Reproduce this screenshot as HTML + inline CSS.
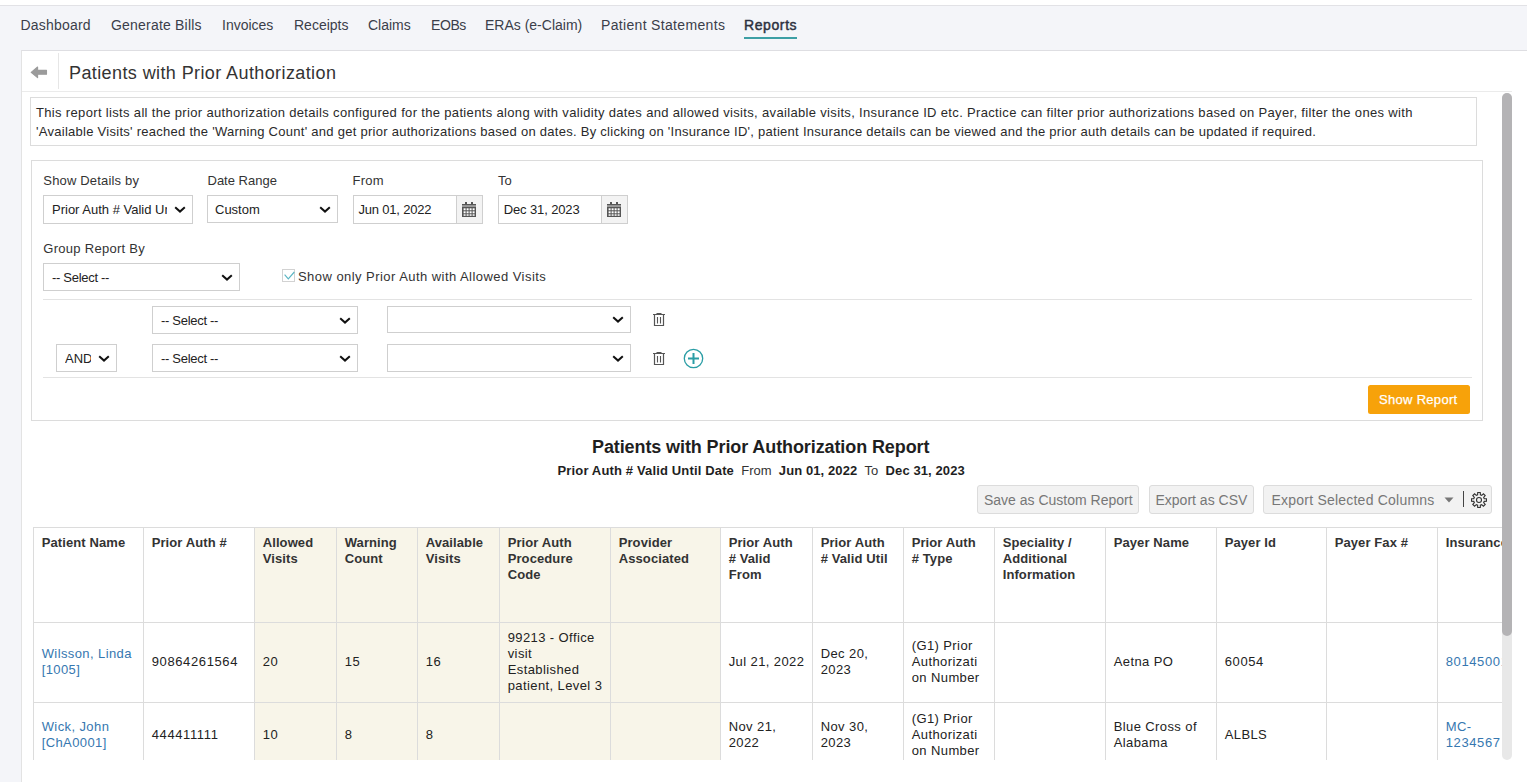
<!DOCTYPE html>
<html><head><meta charset="utf-8">
<style>
*{box-sizing:border-box}
html,body{margin:0;padding:0}
body{width:1527px;height:782px;overflow:hidden;position:relative;background:#f4f5f9;font-family:"Liberation Sans",sans-serif;color:#333}
.a{position:absolute;white-space:nowrap;line-height:normal}
#top{position:absolute;left:0;top:0;width:1527px;height:6px;background:#fff;border-bottom:1px solid #e2e2e6}
.nav{font-size:14px;color:#3b3e4a;top:17px}
#card{position:absolute;left:21px;top:50px;width:1506px;height:732px;background:#fff;border-left:1px solid #e3e3e3;border-top:1px solid #dedee2}
.sel{position:absolute;border:1px solid #cfcfcf;background:#fff;overflow:hidden}
.sel span{position:absolute;font-size:13px;color:#222;white-space:nowrap}
.chev{position:absolute}
.lbl{font-size:13px;color:#333}
.btn{position:absolute;background:#f2f2f2;border:1px solid #dcdcdc;border-radius:3px}
.btn span{position:absolute;font-size:14px;color:#7a7a7a;white-space:nowrap}
#tbl{position:absolute;left:33px;top:527px;width:1469px;height:233px;overflow:hidden}
.td,.th{position:absolute;white-space:nowrap;font-size:13px;line-height:16px;color:#222;letter-spacing:0.4px;margin-left:0.7px;margin-top:-0.5px}
.dg{letter-spacing:0.62px}
.th{font-weight:bold;color:#333;letter-spacing:0.1px}
a{color:#3677b0;text-decoration:none}
</style></head><body>
<div id="top"></div>
<div class="a nav" style="left:20.5px;letter-spacing:0.2px">Dashboard</div>
<div class="a nav" style="left:111px;letter-spacing:0.2px">Generate Bills</div>
<div class="a nav" style="left:222px">Invoices</div>
<div class="a nav" style="left:294px">Receipts</div>
<div class="a nav" style="left:368px">Claims</div>
<div class="a nav" style="left:431px;letter-spacing:-0.4px">EOBs</div>
<div class="a nav" style="left:485px">ERAs (e-Claim)</div>
<div class="a nav" style="left:601px;letter-spacing:0.33px">Patient Statements</div>
<div class="a nav" style="left:744px;color:#2c3140;-webkit-text-stroke:0.45px #2c3140;letter-spacing:0.6px">Reports</div>
<div style="position:absolute;left:744px;top:37px;width:53px;height:1.5px;background:#3d9fa5"></div>

<div id="card"></div>
<div id="tbl">
<div style="position:absolute;left:221px;top:0;width:82px;height:240px;background:#f8f5e9"></div>
<div style="position:absolute;left:303px;top:0;width:81px;height:240px;background:#f8f5e9"></div>
<div style="position:absolute;left:384px;top:0;width:82px;height:240px;background:#f8f5e9"></div>
<div style="position:absolute;left:466px;top:0;width:111px;height:240px;background:#f8f5e9"></div>
<div style="position:absolute;left:577px;top:0;width:110px;height:240px;background:#f8f5e9"></div>
<div style="position:absolute;left:0px;top:0;width:1px;height:240px;background:#dcdcdc"></div>
<div style="position:absolute;left:110px;top:0;width:1px;height:240px;background:#dcdcdc"></div>
<div style="position:absolute;left:221px;top:0;width:1px;height:240px;background:#dcdcdc"></div>
<div style="position:absolute;left:303px;top:0;width:1px;height:240px;background:#dcdcdc"></div>
<div style="position:absolute;left:384px;top:0;width:1px;height:240px;background:#dcdcdc"></div>
<div style="position:absolute;left:466px;top:0;width:1px;height:240px;background:#dcdcdc"></div>
<div style="position:absolute;left:577px;top:0;width:1px;height:240px;background:#dcdcdc"></div>
<div style="position:absolute;left:687px;top:0;width:1px;height:240px;background:#dcdcdc"></div>
<div style="position:absolute;left:779px;top:0;width:1px;height:240px;background:#dcdcdc"></div>
<div style="position:absolute;left:870px;top:0;width:1px;height:240px;background:#dcdcdc"></div>
<div style="position:absolute;left:961px;top:0;width:1px;height:240px;background:#dcdcdc"></div>
<div style="position:absolute;left:1072px;top:0;width:1px;height:240px;background:#dcdcdc"></div>
<div style="position:absolute;left:1183px;top:0;width:1px;height:240px;background:#dcdcdc"></div>
<div style="position:absolute;left:1293px;top:0;width:1px;height:240px;background:#dcdcdc"></div>
<div style="position:absolute;left:1404px;top:0;width:1px;height:240px;background:#dcdcdc"></div>
<div style="position:absolute;left:0;top:0px;width:1600px;height:1px;background:#dcdcdc"></div>
<div style="position:absolute;left:0;top:95px;width:1600px;height:1px;background:#dcdcdc"></div>
<div style="position:absolute;left:0;top:175px;width:1600px;height:1px;background:#dcdcdc"></div>
<div class="th" style="left:8px;top:8.0px">Patient Name</div>
<div class="th" style="left:118px;top:8.0px">Prior Auth #</div>
<div class="th" style="left:229px;top:8.0px">Allowed<br>Visits</div>
<div class="th" style="left:311px;top:8.0px">Warning<br>Count</div>
<div class="th" style="left:392px;top:8.0px">Available<br>Visits</div>
<div class="th" style="left:474px;top:8.0px">Prior Auth<br>Procedure<br>Code</div>
<div class="th" style="left:585px;top:8.0px">Provider<br>Associated</div>
<div class="th" style="left:695px;top:8.0px">Prior Auth<br># Valid<br>From</div>
<div class="th" style="left:787px;top:8.0px">Prior Auth<br># Valid Util</div>
<div class="th" style="left:878px;top:8.0px">Prior Auth<br># Type</div>
<div class="th" style="left:969px;top:8.0px">Speciality /<br>Additional<br>Information</div>
<div class="th" style="left:1080px;top:8.0px">Payer Name</div>
<div class="th" style="left:1191px;top:8.0px">Payer Id</div>
<div class="th" style="left:1301px;top:8.0px">Payer Fax #</div>
<div class="th" style="left:1412px;top:8.0px">Insurance ID</div>
<div class="td" style="left:8px;top:119.5px"><a>Wilsson, Linda<br>[1005]</a></div>
<div class="td" style="left:118px;top:127.5px"><span class="dg">90864261564</span></div>
<div class="td" style="left:229px;top:127.5px"><span class="dg">20</span></div>
<div class="td" style="left:311px;top:127.5px"><span class="dg">15</span></div>
<div class="td" style="left:392px;top:127.5px"><span class="dg">16</span></div>
<div class="td" style="left:474px;top:103.5px">99213 - Office<br>visit<br>Established<br>patient, Level 3</div>

<div class="td" style="left:695px;top:127.5px">Jul 21, 2022</div>
<div class="td" style="left:787px;top:119.5px">Dec 20,<br>2023</div>
<div class="td" style="left:878px;top:111.5px">(G1) Prior<br>Authorizati<br>on Number</div>

<div class="td" style="left:1080px;top:127.5px">Aetna PO</div>
<div class="td" style="left:1191px;top:127.5px"><span class="dg">60054</span></div>

<div class="td" style="left:1412px;top:127.5px"><a><span class="dg">80145001</span></a></div>
<div class="td" style="left:8px;top:192.0px"><a>Wick, John<br>[ChA0001]</a></div>
<div class="td" style="left:118px;top:200.0px"><span class="dg">444411111</span></div>
<div class="td" style="left:229px;top:200.0px"><span class="dg">10</span></div>
<div class="td" style="left:311px;top:200.0px">8</div>
<div class="td" style="left:392px;top:200.0px">8</div>


<div class="td" style="left:695px;top:192.0px">Nov 21,<br>2022</div>
<div class="td" style="left:787px;top:192.0px">Nov 30,<br>2023</div>
<div class="td" style="left:878px;top:184.0px">(G1) Prior<br>Authorizati<br>on Number</div>

<div class="td" style="left:1080px;top:192.0px">Blue Cross of<br>Alabama</div>
<div class="td" style="left:1191px;top:200.0px">ALBLS</div>

<div class="td" style="left:1412px;top:192.0px"><a>MC-<br><span class="dg">1234567</span></a></div>
</div>
<!-- title bar -->
<svg style="position:absolute;left:30px;top:66px" width="18" height="13" viewBox="0 0 18 13"><path d="M1.2 6.4 L7.6 1 L7.6 4.4 L16.5 4.4 L16.5 8.3 L7.6 8.3 L7.6 11.7 Z" fill="#9b9b9b" stroke="#9b9b9b" stroke-width="1.1" stroke-linejoin="round"/></svg>
<div style="position:absolute;left:58px;top:53px;width:1px;height:36px;background:#e6e6e6"></div>
<div class="a" style="left:69px;top:63px;font-size:18px;color:#333;letter-spacing:0.4px">Patients with Prior Authorization</div>
<div style="position:absolute;left:22px;top:91px;width:1490px;height:1px;background:#ebebeb"></div>

<!-- description -->
<div style="position:absolute;left:30px;top:97px;width:1447px;height:49px;border:1px solid #dcdcdc"></div>
<div class="a" style="left:36px;top:104px;font-size:13px;color:#2a2a2a;line-height:18.7px;letter-spacing:0.337px">This report lists all the prior authorization details configured for the patients along with validity dates and allowed visits, available visits, Insurance ID etc. Practice can filter prior authorizations based on Payer, filter the ones with<br><span style="letter-spacing:0.27px">'Available Visits' reached the 'Warning Count' and get prior authorizations based on dates. By clicking on 'Insurance ID', patient Insurance details can be viewed and the prior auth details can be updated if required.</span></div>

<!-- filter box -->
<div style="position:absolute;left:31px;top:160px;width:1452px;height:261px;border:1px solid #dcdcdc"></div>
<div class="a lbl" style="left:43.3px;top:172.7px;letter-spacing:0.17px">Show Details by</div>
<div class="a lbl" style="left:207.5px;top:172.7px">Date Range</div>
<div class="a lbl" style="left:352.5px;top:172.7px;letter-spacing:0.25px">From</div>
<div class="a lbl" style="left:498px;top:172.7px">To</div>
<div class="sel" style="left:43px;top:195px;width:150px;height:29px"><span style="left:8px;top:6.0px;width:115px;overflow:hidden;">Prior Auth # Valid Until Date</span></div><svg class="chev" style="left:173.8px;top:205.5px" width="12" height="7" viewBox="0 0 12 7"><path d="M1.2 1.3 L6 5.6 L10.8 1.3" fill="none" stroke="#111" stroke-width="2"/></svg>
<div class="sel" style="left:207px;top:195px;width:131px;height:28px"><span style="left:7px;top:5.5px;">Custom</span></div><svg class="chev" style="left:318.8px;top:205.5px" width="12" height="7" viewBox="0 0 12 7"><path d="M1.2 1.3 L6 5.6 L10.8 1.3" fill="none" stroke="#111" stroke-width="2"/></svg>
<div class="sel" style="left:353px;top:195px;width:104px;height:29px"><span style="left:4.5px;top:6px;letter-spacing:-0.2px">Jun 01, 2022</span></div>
<div style="position:absolute;left:456px;top:195px;width:27px;height:29px;background:#f3f3f3;border:1px solid #cfcfcf"></div>
<svg width="14" height="15" viewBox="0 0 14 15" style="position:absolute;left:462px;top:202px"><rect x="3" y="0" width="2" height="3" fill="#555"/><rect x="9" y="0" width="2" height="3" fill="#555"/><rect x="0" y="2" width="14" height="1.6" fill="#555"/><rect x="0" y="3.6" width="14" height="1.6" fill="#999"/><rect x="0" y="5" width="14" height="10" fill="#555"/><g fill="#fff"><rect x="1.6" y="6.3" width="2" height="2"/><rect x="4.6" y="6.3" width="2" height="2"/><rect x="7.6" y="6.3" width="2" height="2"/><rect x="10.6" y="6.3" width="2" height="2"/><rect x="1.6" y="9.3" width="2" height="2"/><rect x="4.6" y="9.3" width="2" height="2"/><rect x="7.6" y="9.3" width="2" height="2"/><rect x="10.6" y="9.3" width="2" height="2"/><rect x="1.6" y="12.3" width="2" height="1.5"/><rect x="4.6" y="12.3" width="2" height="1.5"/><rect x="7.6" y="12.3" width="2" height="1.5"/><rect x="10.6" y="12.3" width="2" height="1.5"/></g></svg>
<div class="sel" style="left:498px;top:195px;width:104px;height:29px"><span style="left:4.7px;top:6px;letter-spacing:-0.12px">Dec 31, 2023</span></div>
<div style="position:absolute;left:601px;top:195px;width:27px;height:29px;background:#f3f3f3;border:1px solid #cfcfcf"></div>
<svg width="14" height="15" viewBox="0 0 14 15" style="position:absolute;left:607px;top:202px"><rect x="3" y="0" width="2" height="3" fill="#555"/><rect x="9" y="0" width="2" height="3" fill="#555"/><rect x="0" y="2" width="14" height="1.6" fill="#555"/><rect x="0" y="3.6" width="14" height="1.6" fill="#999"/><rect x="0" y="5" width="14" height="10" fill="#555"/><g fill="#fff"><rect x="1.6" y="6.3" width="2" height="2"/><rect x="4.6" y="6.3" width="2" height="2"/><rect x="7.6" y="6.3" width="2" height="2"/><rect x="10.6" y="6.3" width="2" height="2"/><rect x="1.6" y="9.3" width="2" height="2"/><rect x="4.6" y="9.3" width="2" height="2"/><rect x="7.6" y="9.3" width="2" height="2"/><rect x="10.6" y="9.3" width="2" height="2"/><rect x="1.6" y="12.3" width="2" height="1.5"/><rect x="4.6" y="12.3" width="2" height="1.5"/><rect x="7.6" y="12.3" width="2" height="1.5"/><rect x="10.6" y="12.3" width="2" height="1.5"/></g></svg>
<div class="a lbl" style="left:43.3px;top:241.2px;letter-spacing:0.28px">Group Report By</div>
<div class="sel" style="left:43px;top:263px;width:197px;height:28px"><span style="left:8px;top:5.5px;"><i style="font-style:normal;letter-spacing:-0.3px">-- Select --</i></span></div><svg class="chev" style="left:220.8px;top:273.5px" width="12" height="7" viewBox="0 0 12 7"><path d="M1.2 1.3 L6 5.6 L10.8 1.3" fill="none" stroke="#111" stroke-width="2"/></svg>
<div style="position:absolute;left:282px;top:269px;width:13px;height:13px;border:1px solid #d2d2d2;background:#fff"></div>
<svg style="position:absolute;left:282px;top:269px" width="13" height="13" viewBox="0 0 13 13"><path d="M2.6 5.6 L6.3 9.8 L12.3 3" fill="none" stroke="#5ab5c3" stroke-width="1.15"/></svg>
<div class="a lbl" style="left:298px;top:268.8px;letter-spacing:0.45px">Show only Prior Auth with Allowed Visits</div>
<div style="position:absolute;left:43px;top:299px;width:1429px;height:1px;background:#e3e3e3"></div>
<div class="sel" style="left:152px;top:306px;width:206px;height:28px"><span style="left:8px;top:5.5px;"><i style="font-style:normal;letter-spacing:-0.3px">-- Select --</i></span></div><svg class="chev" style="left:338.8px;top:316.5px" width="12" height="7" viewBox="0 0 12 7"><path d="M1.2 1.3 L6 5.6 L10.8 1.3" fill="none" stroke="#111" stroke-width="2"/></svg>
<div class="sel" style="left:387px;top:306px;width:244px;height:27px"></div><svg class="chev" style="left:611.8px;top:316.0px" width="12" height="7" viewBox="0 0 12 7"><path d="M1.2 1.3 L6 5.6 L10.8 1.3" fill="none" stroke="#111" stroke-width="2"/></svg>
<svg width="14" height="15" viewBox="0 0 14 15" style="position:absolute;left:652px;top:312px"><path d="M4.5 1.5 H9.5 M1 2.5 H13" stroke="#555" stroke-width="1.2" fill="none"/><path d="M2.5 3 V13.5 H11.5 V3" stroke="#555" stroke-width="1.2" fill="none"/><path d="M5.5 5 V11.5 M8.5 5 V11.5" stroke="#555" stroke-width="1.1"/></svg>
<div class="sel" style="left:56px;top:344px;width:61px;height:28px"><span style="left:8px;top:5.5px;width:26px;overflow:hidden;">AND</span></div><svg class="chev" style="left:97.8px;top:354.5px" width="12" height="7" viewBox="0 0 12 7"><path d="M1.2 1.3 L6 5.6 L10.8 1.3" fill="none" stroke="#111" stroke-width="2"/></svg>
<div class="sel" style="left:152px;top:344px;width:206px;height:28px"><span style="left:8px;top:5.5px;"><i style="font-style:normal;letter-spacing:-0.3px">-- Select --</i></span></div><svg class="chev" style="left:338.8px;top:354.5px" width="12" height="7" viewBox="0 0 12 7"><path d="M1.2 1.3 L6 5.6 L10.8 1.3" fill="none" stroke="#111" stroke-width="2"/></svg>
<div class="sel" style="left:387px;top:344px;width:244px;height:28px"></div><svg class="chev" style="left:611.8px;top:354.5px" width="12" height="7" viewBox="0 0 12 7"><path d="M1.2 1.3 L6 5.6 L10.8 1.3" fill="none" stroke="#111" stroke-width="2"/></svg>
<svg width="14" height="15" viewBox="0 0 14 15" style="position:absolute;left:652px;top:351px"><path d="M4.5 1.5 H9.5 M1 2.5 H13" stroke="#555" stroke-width="1.2" fill="none"/><path d="M2.5 3 V13.5 H11.5 V3" stroke="#555" stroke-width="1.2" fill="none"/><path d="M5.5 5 V11.5 M8.5 5 V11.5" stroke="#555" stroke-width="1.1"/></svg>
<svg style="position:absolute;left:683px;top:348px" width="21" height="21" viewBox="0 0 21 21"><circle cx="10.5" cy="10.5" r="9.2" fill="none" stroke="#2a9da5" stroke-width="1.3"/><path d="M10.5 5 V16 M5 10.5 H16" stroke="#2a9da5" stroke-width="2"/></svg>
<div style="position:absolute;left:43px;top:377px;width:1429px;height:1px;background:#e3e3e3"></div>
<div style="position:absolute;left:1368px;top:385px;width:102px;height:28.5px;background:#f7a20a;border-radius:2.5px"></div>
<div class="a" style="left:1379px;top:392.2px;font-size:13px;color:#fff;letter-spacing:0.3px;-webkit-text-stroke:0.25px #fff">Show Report</div>
<div class="a" style="left:592px;top:436.5px;font-size:18px;font-weight:bold;color:#1f1f1f;letter-spacing:-0.1px">Patients with Prior Authorization Report</div>
<div class="a" style="left:557.5px;top:463px;font-size:13px;color:#1f1f1f"><b style="letter-spacing:0.15px">Prior Auth # Valid Until Date</b>&nbsp;&nbsp;<span style="color:#333">From</span>&nbsp;&nbsp;<b style="letter-spacing:0.1px">Jun 01, 2022</b>&nbsp;&nbsp;<span style="color:#333">To</span>&nbsp;&nbsp;<b style="letter-spacing:0.1px">Dec 31, 2023</b></div>
<div class="btn" style="left:977px;top:485px;width:162px;height:29px"></div><div class="a" style="left:984px;top:492.2px;font-size:14px;color:#777">Save as Custom Report</div>
<div class="btn" style="left:1149px;top:485px;width:105px;height:29px"></div><div class="a" style="left:1155.5px;top:492.2px;font-size:14px;color:#777">Export as CSV</div>
<div class="btn" style="left:1263px;top:485px;width:229px;height:29px"></div><div class="a" style="left:1271.5px;top:492.2px;font-size:14px;color:#777;letter-spacing:0.22px">Export Selected Columns</div>
<svg style="position:absolute;left:1444px;top:497px" width="10" height="6" viewBox="0 0 10 6"><path d="M0.5 0.5 H9.5 L5 5.5 Z" fill="#777"/></svg>
<div style="position:absolute;left:1463px;top:491px;width:1px;height:16px;background:#444"></div>
<svg style="position:absolute;left:1471px;top:491.5px" width="16" height="16" viewBox="0 0 16 16"><path d="M6.60 2.78 L6.75 0.50 L9.25 0.50 L9.40 2.78 L10.70 3.32 L12.41 1.81 L14.19 3.59 L12.68 5.30 L13.22 6.60 L15.50 6.75 L15.50 9.25 L13.22 9.40 L12.68 10.70 L14.19 12.41 L12.41 14.19 L10.70 12.68 L9.40 13.22 L9.25 15.50 L6.75 15.50 L6.60 13.22 L5.30 12.68 L3.59 14.19 L1.81 12.41 L3.32 10.70 L2.78 9.40 L0.50 9.25 L0.50 6.75 L2.78 6.60 L3.32 5.30 L1.81 3.59 L3.59 1.81 L5.30 3.32 Z" fill="none" stroke="#333" stroke-width="1.15" stroke-linejoin="miter"/><circle cx="8" cy="8" r="2.5" fill="none" stroke="#333" stroke-width="1.1"/></svg>
<div style="position:absolute;left:1502px;top:93px;width:10px;height:667px;background:#e8e8e8;border-radius:5px"></div>
<div style="position:absolute;left:1502px;top:93px;width:10px;height:543px;background:#b4b3b5;border-radius:5px"></div>
</body></html>
